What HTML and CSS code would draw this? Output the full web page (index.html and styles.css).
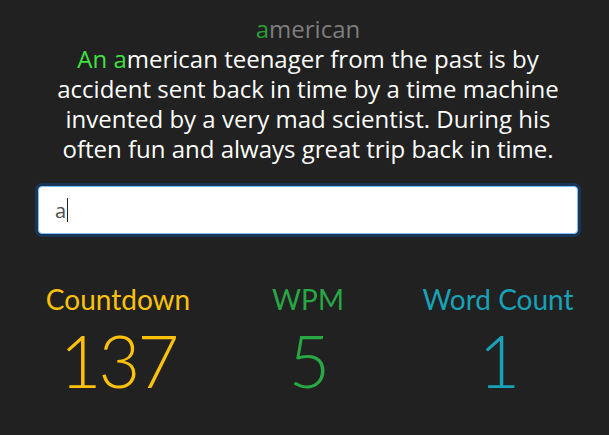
FILE: index.html
```html
<!DOCTYPE html>
<html lang="en">
<head>
<meta charset="utf-8">
<title>Typing Test</title>
<link rel="stylesheet" href="styles.css">
</head>
<body>
<main class="container">
  <div class="word"><span class="word-done">a</span>merican</div>
  <p class="passage"><span class="typed">An a</span>merican teenager from the past is by accident sent back in time by a time machine invented by a very mad scientist. During his often fun and always great trip back in time.</p>
  <div class="field" role="textbox" aria-label="Type here">a<span class="caret"></span></div>
  <div class="stats">
    <div class="stat stat-warning">
      <h3 class="stat-label">Countdown</h3>
      <div class="stat-value">137</div>
    </div>
    <div class="stat stat-success">
      <h3 class="stat-label">WPM</h3>
      <div class="stat-value">5</div>
    </div>
    <div class="stat stat-info">
      <h3 class="stat-label">Word Count</h3>
      <div class="stat-value">1</div>
    </div>
  </div>
</main>
</body>
</html>
```
FILE: styles.css
```css
html, body {
  margin: 0;
  padding: 0;
  background: #212121;
  height: 100%;
}
body {
  font-family: Lato, "Open Sans", sans-serif;
  font-variant-ligatures: none;
  color: #ffffff;
  padding-top: 14px;
  box-sizing: border-box;
}
.container {
  width: 570px;
  margin-left: 23px;
  padding: 0 15px;
  box-sizing: border-box;
}
.word,
.passage {
  font-family: "Open Sans", Lato, sans-serif;
  font-size: 24px;
  line-height: 30px;
  text-align: center;
}
.word {
  color: #7d7d7d;
}
.word-done {
  color: #2a9d3a;
}
.passage {
  margin: 0;
  padding: 0 15px;
  color: #ffffff;
}
.typed {
  color: #40e040;
}
.field {
  margin-top: 22px;
  height: 48px;
  box-sizing: border-box;
  padding: 0 16px;
  display: flex;
  align-items: center;
  background: #ffffff;
  border: 1px solid #80bdff;
  border-radius: 4px;
  box-shadow: 0 0 0 3px rgba(0, 123, 255, 0.25);
  font-family: "Open Sans", Lato, sans-serif;
  font-size: 20px;
  color: #495057;
}
.caret {
  display: inline-block;
  width: 1px;
  height: 24px;
  background: #222;
  margin-left: 1px;
}
.stats {
  display: grid;
  grid-template-columns: repeat(3, 1fr);
  margin: 49px -15px 0;
}
.stat {
  text-align: center;
}
.stat-label {
  margin: 0;
  font-size: 28px;
  line-height: 33.6px;
  font-weight: 400;
}
.stat-value {
  font-size: 72px;
  line-height: 86px;
  font-weight: 300;
  letter-spacing: -3px;
}
.stat-warning { color: #ffc107; }
.stat-success { color: #28a745; }
.stat-info { color: #17a2b8; }
```
